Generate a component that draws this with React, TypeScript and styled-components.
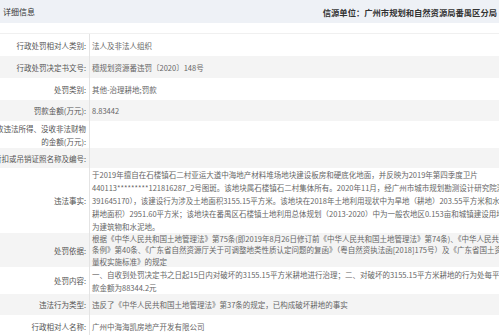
import React from 'react';
import styled, { createGlobalStyle } from 'styled-components';

const GlobalStyle = createGlobalStyle`
  html, body {
    margin: 0;
    padding: 0;
    background: #fff;
  }
  body {
    width: 499px;
    height: 335px;
    overflow: hidden;
    font-family: "Noto Sans CJK SC", "Noto Sans", sans-serif;
  }
`;

const Page = styled.div`
  width: 499px;
  overflow: hidden;
`;

const Header = styled.div`
  height: 23px;
  background: #eef1f6;
  display: flex;
  align-items: center;
  justify-content: space-between;
  padding: 0 2px 0 3px;
`;

const Title = styled.span`
  font-size: 8px;
  color: #333;
`;

const Source = styled.span`
  font-size: 8.3px;
  font-weight: 700;
  color: #333;
`;

const Table = styled.div`
  width: 600px;
  margin: 10px 0 0 -14px;
  border-top: 1px solid #f0f0f0;
  display: flex;
  flex-direction: column;
`;

const Row = styled.div<{ $h: number; $alt: boolean }>`
  display: grid;
  grid-template-columns: 103px 1fr;
  height: ${({ $h }) => $h}px;
  background: ${({ $alt }) => ($alt ? '#f4f4f4' : '#fff')};
`;

const Label = styled.div`
  display: flex;
  align-items: center;
  justify-content: flex-end;
  text-align: right;
  padding-right: 3px;
  font-size: 7.5px;
  line-height: 13px;
  color: #555;
`;

const Value = styled.div<{ $lh: number }>`
  display: flex;
  flex-direction: column;
  justify-content: center;
  border-left: 1px solid #e4e4e4;
  padding-left: 2px;
  font-size: 7.5px;
  line-height: ${({ $lh }) => $lh}px;
  color: #666;
  overflow: hidden;
`;

const Line = styled.div`
  white-space: nowrap;
`;

interface Item {
  label: string;
  lines: string[];
  h: number;
  lh?: number;
}

const items: Item[] = [
  { label: '行政处罚相对人类别:', lines: ['法人及非法人组织'], h: 22 },
  { label: '行政处罚决定书文号:', lines: ['穗规划资源番违罚〔2020〕148号'], h: 22 },
  { label: '处罚类别:', lines: ['其他-治理耕地;罚款'], h: 22 },
  { label: '罚款金额(万元):', lines: ['8.83442'], h: 21 },
  { label: '没收违法所得、没收非法财物的金额(万元):', lines: [], h: 27 },
  { label: '暂扣或吊销证照名称及编号:', lines: [], h: 20 },
  {
    label: '违法事实:',
    lines: [
      '于2019年擅自在石楼镇石二村亚运大道中海地产材料堆场地块建设板房和硬底化地面，并反映为2019年第四季度卫片',
      '440113*********121816287_2号图斑。该地块属石楼镇石二村集体所有。2020年11月，经广州市城市规划勘测设计研究院测绘（编号：',
      '391645170），该建设行为涉及土地面积3155.15平方米。该地块在2018年土地利用现状中为旱地（耕地）203.55平方米和水田',
      '耕地面积）2951.60平方米；该地块在番禺区石楼镇土地利用总体规划（2013-2020）中为一般农地区0.153亩和城镇建设用地，现状',
      '为建筑物和水泥地。',
    ],
    h: 65,
    lh: 13,
  },
  {
    label: '处罚依据:',
    lines: [
      '根据《中华人民共和国土地管理法》第75条(即2019年8月26日修订前《中华人民共和国土地管理法》第74条)、《中华人民共和国土地管理法实施',
      '条例》第40条、《广东省自然资源厅关于可调整地类性质认定问题的复函》（粤自然资执法函[2018]175号）及《广东省国土资源行政处罚自由裁',
      '量权实施标准》的规定',
    ],
    h: 34,
    lh: 11.3,
  },
  {
    label: '处罚内容:',
    lines: [
      '一、自收到处罚决定书之日起15日内对破坏的3155.15平方米耕地进行治理；二、对破坏的3155.15平方米耕地的行为处每平方米28元罚',
      '款金额为88344.2元',
    ],
    h: 27,
    lh: 13,
  },
  { label: '违法行为类型:', lines: ['违反了《中华人民共和国土地管理法》第37条的规定，已构成破坏耕地的事实'], h: 21 },
  { label: '行政相对人名称:', lines: ['广州中海海凯房地产开发有限公司'], h: 22 },
];

const App: React.FC = () => {
  return (
    <Page>
      <GlobalStyle />
      <Header>
        <Title>详细信息</Title>
        <Source>信源单位：广州市规划和自然资源局番禺区分局</Source>
      </Header>
      <Table>
        {items.map((item, i) => (
          <Row key={item.label} $h={item.h} $alt={i % 2 === 1}>
            <Label>{item.label}</Label>
            <Value $lh={item.lh ?? 13}>
              {item.lines.map(line => (
                <Line key={line}>{line}</Line>
              ))}
            </Value>
          </Row>
        ))}
      </Table>
    </Page>
  );
};

export default App;
